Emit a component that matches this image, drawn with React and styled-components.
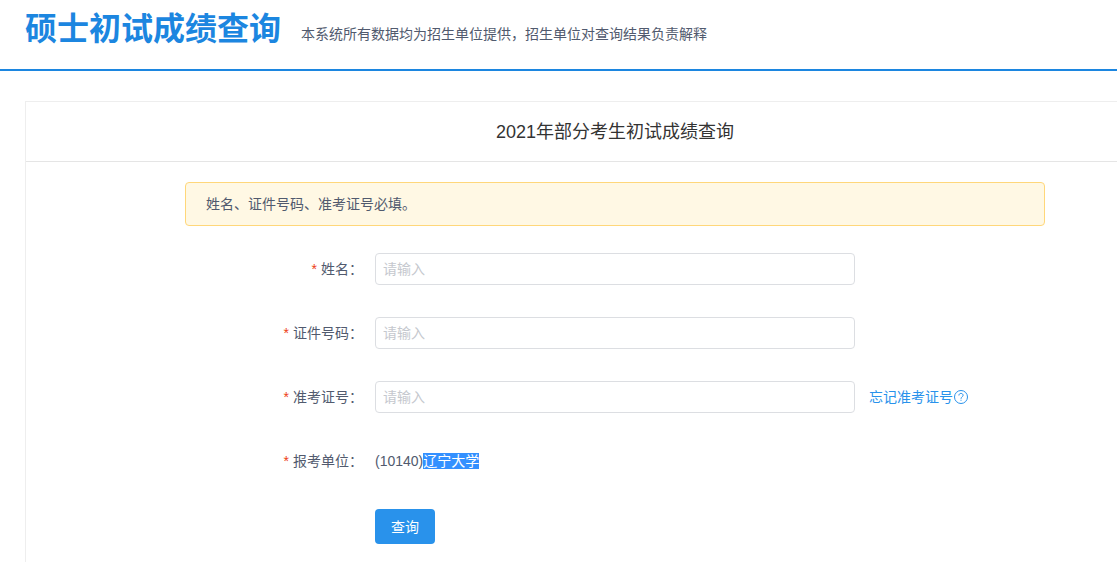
import styled, { createGlobalStyle } from "styled-components";
import { useState } from "react";

const fields = [
  { id: "xm", label: "姓名" },
  { id: "zjhm", label: "证件号码" },
  { id: "ksbh", label: "准考证号", help: "忘记准考证号" },
];

export default function App() {
  const [values, setValues] = useState({ xm: "", zjhm: "", ksbh: "" });

  const handleChange = (e) => {
    setValues({ ...values, [e.target.id]: e.target.value });
  };

  return (
    <Page>
      <GlobalStyle />
      <Header>
        <SiteTitle>硕士初试成绩查询</SiteTitle>
        <SiteNote>
          本系统所有数据均为招生单位提供，招生单位对查询结果负责解释
        </SiteNote>
      </Header>
      <Panel>
        <PanelTitle>2021年部分考生初试成绩查询</PanelTitle>
        <PanelBody>
          <Alert>姓名、证件号码、准考证号必填。</Alert>
          <Form onSubmit={(e) => e.preventDefault()}>
            {fields.map(({ id, label, help }) => (
              <Row key={id}>
                <Label htmlFor={id}>
                  <Required>*</Required>
                  {label}：
                </Label>
                <Input
                  id={id}
                  type="text"
                  placeholder="请输入"
                  value={values[id]}
                  onChange={handleChange}
                />
                {help && (
                  <HelpLink href="#">
                    {help}
                    <QuestionIcon />
                  </HelpLink>
                )}
              </Row>
            ))}
            <Row>
              <Label as="span">
                <Required>*</Required>
                报考单位：
              </Label>
              <span>(10140)</span>
              <Selected>辽宁大学</Selected>
            </Row>
            <Actions>
              <SubmitButton type="submit">查询</SubmitButton>
            </Actions>
          </Form>
        </PanelBody>
      </Panel>
    </Page>
  );
}

function QuestionIcon() {
  return (
    <svg width="14" height="14" viewBox="0 0 14 14" fill="none" aria-hidden="true">
      <circle cx="7" cy="7" r="6.5" stroke="currentColor" />
      <path
        d="M4.9 5.5C4.9 4.2 5.8 3.4 7 3.4S9.1 4.2 9.1 5.3C9.1 6.7 7 6.9 7 8.8"
        stroke="currentColor"
      />
      <path d="M6.5 9.8h1v1h-1z" fill="currentColor" />
    </svg>
  );
}

const GlobalStyle = createGlobalStyle`
  * {
    box-sizing: border-box;
  }
  body {
    margin: 0;
    background: #fff;
    color: #515a6e;
    font-family: "Liberation Sans", "Noto Sans CJK SC", sans-serif;
    font-size: 14px;
    line-height: 20px;
  }
`;

const Page = styled.div`
  min-height: 100vh;
  overflow-x: clip;
`;

const Header = styled.header`
  display: flex;
  align-items: center;
  gap: 20px;
  padding: 9px 25px 20px;
  border-bottom: 2px solid #1c86e0;
`;

const SiteTitle = styled.h1`
  margin: 0;
  color: #1c86e0;
  font-size: 32px;
  line-height: 40px;
  white-space: nowrap;
`;

const SiteNote = styled.span`
  padding-top: 10px;
`;

const Panel = styled.section`
  min-width: 1180px;
  margin: 30px 25px 0;
  border: 1px solid #eee;
`;

const PanelTitle = styled.h2`
  margin: 0;
  padding: 16px 16px 14px;
  border-bottom: 1px solid #e5e5e5;
  color: #333;
  font-size: 18px;
  font-weight: 400;
  line-height: 29px;
  text-align: center;
`;

const PanelBody = styled.div`
  width: 860px;
  margin: 0 auto;
  padding: 20px 0;
`;

const Alert = styled.div`
  padding: 11px 20px;
  border: 1px solid #ffd77a;
  border-radius: 4px;
  background: #fff8e4;
`;

const Form = styled.form`
  display: flex;
  flex-direction: column;
  gap: 32px;
  padding-top: 27px;
`;

const Row = styled.div`
  display: flex;
  align-items: center;
  height: 32px;
`;

const Label = styled.label`
  width: 190px;
  padding-right: 12px;
  text-align: right;
`;

const Required = styled.span`
  margin-right: 4px;
  color: #ed4014;
`;

const Input = styled.input`
  width: 480px;
  height: 32px;
  padding: 0 7px;
  border: 1px solid #dcdee2;
  border-radius: 4px;
  background: #fff;
  color: #515a6e;
  font: inherit;
  &::placeholder {
    color: #c5c8ce;
  }
  &:focus {
    outline: none;
    border-color: #2d8cf0;
  }
`;

const HelpLink = styled.a`
  display: flex;
  align-items: center;
  gap: 1px;
  margin-left: 14px;
  color: #2992eb;
  text-decoration: none;
`;

const Selected = styled.mark`
  background: #3390ff;
  color: #fff;
  line-height: 16px;
  display: inline-block;
`;

const Actions = styled.div`
  padding-left: 190px;
`;

const SubmitButton = styled.button`
  height: 35px;
  padding: 0 16px;
  border: 0;
  border-radius: 4px;
  background: #2992eb;
  color: #fff;
  font: inherit;
  cursor: pointer;
`;
